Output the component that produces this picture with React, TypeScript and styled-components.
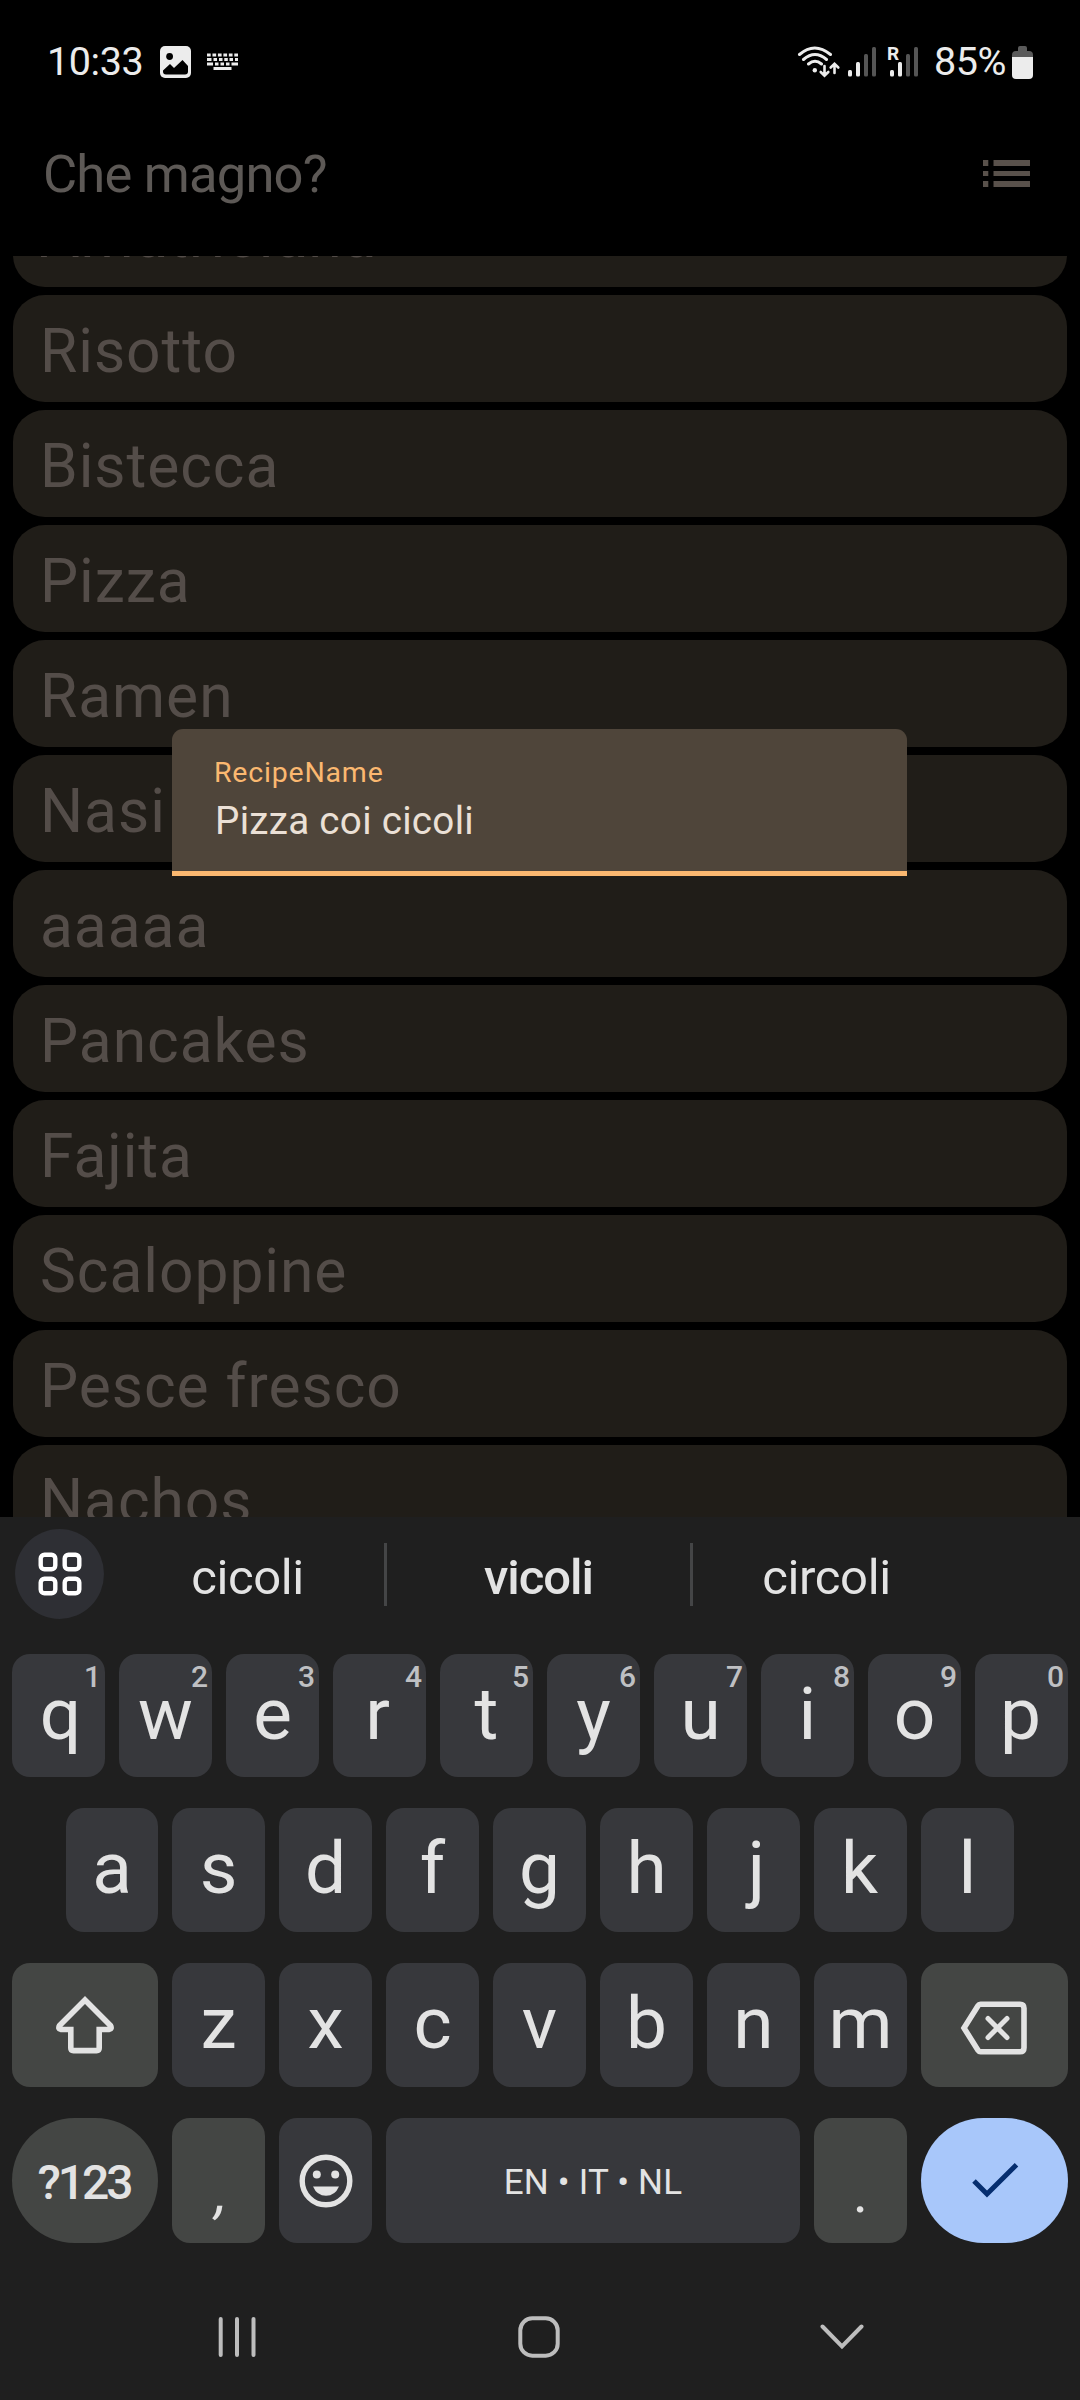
import React from "react";
import styled, { createGlobalStyle } from "styled-components";

const GlobalStyle = createGlobalStyle`
  * { box-sizing: border-box; }
  html, body { margin: 0; padding: 0; background: #000; }
  body { font-family: Roboto, "Noto Sans", sans-serif; overflow: hidden; }
  svg { display: block; flex: none; }
`;

const Screen = styled.div`
  position: relative;
  width: 1080px;
  height: 2400px;
  display: flex;
  flex-direction: column;
  overflow: hidden;
  background: #000;
`;

const StatusBar = styled.div`
  height: 124px;
  flex: none;
  display: flex;
  align-items: center;
  justify-content: space-between;
  padding: 0 47px 0 47px;
  color: #ececec;
`;

const StatusGroup = styled.div<{ $gap?: number }>`
  display: flex;
  align-items: center;
  gap: ${(p) => p.$gap ?? 0}px;
`;

const StatusText = styled.span<{ $width: number }>`
  width: ${(p) => p.$width}px;
  font-size: 39.5px;
  line-height: 48px;
  letter-spacing: -0.4px;
  white-space: nowrap;
`;

const AppBar = styled.header`
  height: 132px;
  flex: none;
  display: flex;
  align-items: center;
  justify-content: space-between;
  padding: 0 50px 33px 43px;
`;

const Title = styled.h1`
  margin: 0;
  font-size: 52.5px;
  font-weight: 400;
  line-height: 64px;
  letter-spacing: -0.8px;
  color: #5d5956;
`;

const Viewport = styled.main`
  height: 1261px;
  flex: none;
  overflow: hidden;
  padding: 0 13px;
`;

const RecipeList = styled.ul`
  list-style: none;
  margin: -76px 0 0;
  padding: 0;
  display: flex;
  flex-direction: column;
  gap: 8px;
`;

const RecipeCard = styled.li`
  height: 107px;
  flex: none;
  display: flex;
  align-items: center;
  padding: 6px 27px 0;
  border-radius: 32px;
  background: #201d18;
  color: #544d49;
  font-size: 60.5px;
  line-height: 72px;
  letter-spacing: 0.95px;
`;

const NameField = styled.label`
  position: absolute;
  left: 172px;
  top: 729px;
  width: 735px;
  height: 147px;
  display: flex;
  flex-direction: column;
  padding: 27px 42px 0;
  border-radius: 11px 11px 0 0;
  border-bottom: 5px solid #fbb870;
  background: #4f453a;
`;

const FieldLabel = styled.span`
  font-size: 28.5px;
  line-height: 34px;
  letter-spacing: 0.8px;
  color: #fbb870;
`;

const FieldValue = styled.span`
  margin: 8px 0 0 1px;
  font-size: 38.6px;
  line-height: 46px;
  letter-spacing: 0.3px;
  color: #ebe0d6;
`;

const Keyboard = styled.section`
  height: 883px;
  flex: none;
  display: flex;
  flex-direction: column;
  background: #1f1f1f;
  color: #e3e3e3;
`;

const SuggestionStrip = styled.div`
  height: 137px;
  flex: none;
  display: flex;
  align-items: flex-start;
  padding: 12px 120px 0 15px;
`;

const ToolsButton = styled.div`
  width: 89px;
  height: 90px;
  flex: none;
  display: flex;
  align-items: center;
  justify-content: center;
  border-radius: 50%;
  background: #2e2f34;
`;

const Suggestion = styled.div<{ $width: number; $strong?: boolean; $shift?: number }>`
  width: ${(p) => p.$width}px;
  height: 90px;
  display: flex;
  align-items: center;
  justify-content: center;
  padding: 6px 0 0 ${(p) => p.$shift ?? 0}px;
  font-size: 49px;
  font-weight: ${(p) => (p.$strong ? 500 : 400)};
  letter-spacing: ${(p) => (p.$strong ? -1 : -0.4)}px;
`;

const Divider = styled.div`
  width: 3px;
  height: 63px;
  margin-top: 14px;
  background: #444546;
`;

const Keys = styled.div`
  display: flex;
  flex-direction: column;
  gap: 31px;
`;

const KeyRow = styled.div<{ $height: number; $inset?: number }>`
  height: ${(p) => p.$height}px;
  display: flex;
  gap: 14px;
  padding: 0 ${(p) => p.$inset ?? 12}px;
`;

type Tone = "plain" | "muted" | "accent";
const tones: Record<Tone, string> = { plain: "#37383c", muted: "#444644", accent: "#a8c7fa" };

const Key = styled.div<{ $tone?: Tone; $width?: number; $pill?: boolean }>`
  position: relative;
  flex: ${(p) => (p.$width ? `0 0 ${p.$width}px` : "1 1 0")};
  display: flex;
  align-items: center;
  justify-content: center;
  border-radius: ${(p) => (p.$pill ? 63 : 18)}px;
  background: ${(p) => tones[p.$tone ?? "plain"]};
`;

const Letter = styled.span<{ $nudge: number }>`
  font-size: 73px;
  line-height: 88px;
  padding-bottom: 4px;
  transform: translateX(${(p) => p.$nudge}px);
`;

const Hint = styled.span`
  position: absolute;
  top: 5px;
  right: 4px;
  font-size: 30px;
  line-height: 36px;
  font-weight: 500;
  color: #bfc0c3;
`;

const SymbolsLabel = styled.span`
  padding: 3px 2px 0 0;
  font-size: 48px;
  font-weight: 500;
  letter-spacing: -3px;
`;

const SpaceLabel = styled.span`
  padding-top: 4px;
  font-size: 35px;
  letter-spacing: 0.2px;
`;

const Punctuation = styled.span<{ $slant?: boolean }>`
  font-size: 58px;
  line-height: 70px;
  padding-top: 22px;
  transform: ${(p) => (p.$slant ? "translateX(5px) skewX(-10deg)" : "none")};
`;

const BackspaceSlot = styled.span`
  padding: 5px 2px 0 0;
`;

const NavBar = styled.nav`
  flex: 1;
  display: flex;
  justify-content: space-between;
  align-items: center;
  padding: 31px 216px 0;
`;

const recipes = [
  "Amatriciana", "Risotto", "Bistecca", "Pizza", "Ramen", "Nasi",
  "aaaaa", "Pancakes", "Fajita", "Scaloppine", "Pesce fresco", "Nachos",
];

/* Optical centring for letters whose side bearings are uneven. */
const nudges: Record<string, number> = { q: 2, r: -2, j: 3, p: -1, k: -1 };

const LetterCap = ({ ch }: { ch: string }) => <Letter $nudge={nudges[ch] ?? 0}>{ch}</Letter>;

const SignalBars = () => (
  <g stroke="none">
    <rect x="0" y="23" width="4" height="6.5" rx="1.5" fill="#ececec" />
    <rect x="8" y="15" width="4" height="14.5" rx="1.5" fill="#ececec" />
    <rect x="16" y="7" width="4" height="22.5" rx="1.5" fill="#555" />
    <rect x="24" y="0" width="4" height="29.5" rx="1.5" fill="#555" />
  </g>
);

const PhotoIcon = () => (
  <svg width="31" height="32" viewBox="0 0 31 32">
    <rect width="31" height="32" rx="5" fill="#ececec" />
    <circle cx="9.6" cy="10.5" r="3.4" fill="#000" />
    <path d="M3 24.5L10 18l4 4 8.5-8 5.5 6v5.500q0 3-3 3H6q-3 0-3-3z" fill="#000" />
  </svg>
);

const KeyboardIcon = () => (
  <svg width="31" height="18" viewBox="0 0 31 18" stroke="#ececec" strokeWidth="3" fill="none">
    <path d="M0 2h31" strokeDasharray="3.700 1.760" />
    <path d="M0 6.500h4.500M6.500 6.500h3.500M12 6.500h3.500M17.300 6.500h3.500M22.500 6.500h3.500M28 6.500h3" />
    <path d="M0 11h6M8 11h3.500M13.500 11h3.500M19 11h3.500M24.500 11h6.500" />
    <path d="M6.500 15.500h18" />
  </svg>
);

const ConnectivityIcons = () => (
  <svg width="124" height="34" viewBox="0 0 124 34" fill="none" stroke="#ececec" strokeWidth="3" strokeLinecap="round">
    <path d="M2.500 9.500q15-13 31 0M6.500 14.500q11.500-10 23 0M11.500 19q6.500-5.500 13 0" />
    <circle cx="17.800" cy="25.200" r="2.200" fill="#ececec" stroke="none" />
    <path d="M27.500 21v9.500M23.700 27l3.800 3.700 3.800-3.700M37.500 28v-9M33.700 22.500l3.800-3.700 3.800 3.700" strokeWidth="2.600" />
    <g transform="translate(51 2)"><SignalBars /></g>
    <g transform="translate(93 2)"><SignalBars /></g>
    <text x="90" y="15" fontFamily="Roboto" fontSize="19" fontWeight="700" fill="#ececec" stroke="none">R</text>
  </svg>
);

const BatteryIcon = () => (
  <svg width="21" height="33" viewBox="0 0 21 33">
    <path d="M6 2q0-2 2-2h5q2 0 2 2v3h2q4 0 4 4v3H0V9q0-4 4-4h2z" fill="#5a5a5a" />
    <path d="M0 11h21v18q0 4-4 4H4q-4 0-4-4z" fill="#ececec" />
  </svg>
);

const ListIcon = () => (
  <svg width="47" height="28" viewBox="0 0 47 28" fill="#59514b">
    <path d="M0 0h5.300v6H0zM10.500 0H47v6H10.500zM0 11h5.300v5H0zM10.500 11H47v5H10.500zM0 21h5.300v6H0zM10.500 21H47v6H10.500z" />
  </svg>
);

const ToolsIcon = () => (
  <svg width="44" height="44" viewBox="0 0 44 44" fill="none" stroke="#fff" strokeWidth="4.400">
    <rect x="2.700" y="2.700" width="14.600" height="14.600" rx="3.800" />
    <rect x="26.700" y="2.700" width="14.600" height="14.600" rx="3.800" />
    <rect x="2.700" y="26.700" width="14.600" height="14.600" rx="3.800" />
    <rect x="26.700" y="26.700" width="14.600" height="14.600" rx="3.800" />
  </svg>
);

const ShiftIcon = () => (
  <svg width="60" height="58" viewBox="0 0 60 58" fill="none" stroke="#e3e3e3" strokeWidth="5.600">
    <path d="M30 4L4.600 29.500q-2 3.500 1.400 4H15.800V52q0 2.600 2.600 2.600h23.200q2.600 0 2.600-2.600V33.500H54q3.400-.5 1.400-4z" />
  </svg>
);

const BackspaceIcon = () => (
  <svg width="68" height="54" viewBox="0 0 68 54" fill="none" stroke="#e3e3e3" strokeWidth="5.600">
    <path d="M20.500 3.300H60q4 0 4 4v39.400q0 4-4 4H20.500q-1.600 0-2.500-1.400L4 27 18 4.700q.9-1.400 2.500-1.400z" />
    <path d="M28 17.500l19 19M47 17.500l-19 19" strokeLinecap="round" strokeWidth="5" />
  </svg>
);

const EmojiIcon = () => (
  <svg width="54" height="54" viewBox="0 0 54 54">
    <circle cx="27" cy="27" r="23.800" fill="none" stroke="#e3e3e3" strokeWidth="5.400" />
    <circle cx="17.800" cy="20.500" r="4" fill="#e3e3e3" />
    <circle cx="36.200" cy="20.500" r="4" fill="#e3e3e3" />
    <path d="M14 32.500h26q-4 9.300-13 9.300t-13-9.300z" fill="#e3e3e3" />
  </svg>
);

const CheckIcon = () => (
  <svg width="48" height="36" viewBox="0 0 48 36" fill="none" stroke="#062e6f" strokeWidth="5">
    <path d="M3 18L16 31 45.500 1.800" />
  </svg>
);

const RecentsIcon = () => (
  <svg width="42" height="42" viewBox="0 0 42 42" stroke="#bdbdbd" strokeWidth="4" strokeLinecap="round">
    <path d="M4.700 3v36M21 3v36M37.500 3v36" />
  </svg>
);

const HomeIcon = () => (
  <svg width="42" height="42" viewBox="0 0 42 42" fill="none" stroke="#bdbdbd" strokeWidth="4">
    <rect x="2.300" y="2.300" width="37.400" height="37.400" rx="12" />
  </svg>
);

const HideIcon = () => (
  <svg width="44" height="42" viewBox="0 0 44 42" fill="none" stroke="#bdbdbd" strokeWidth="4" strokeLinecap="round">
    <path d="M2.500 10.500L22 30.500 41.500 10.500" />
  </svg>
);

export default function App() {
  return (
    <Screen>
      <GlobalStyle />
      <StatusBar>
        <StatusGroup $gap={16}>
          <StatusText $width={97}>10:33</StatusText>
          <PhotoIcon />
          <KeyboardIcon />
        </StatusGroup>
        <StatusGroup>
          <StatusGroup $gap={13}>
            <ConnectivityIcons />
            <StatusText $width={78}>85%</StatusText>
          </StatusGroup>
          <BatteryIcon />
        </StatusGroup>
      </StatusBar>
      <AppBar>
        <Title>Che magno?</Title>
        <ListIcon />
      </AppBar>
      <Viewport>
        <RecipeList>
          {recipes.map((name) => (
            <RecipeCard key={name}>{name}</RecipeCard>
          ))}
        </RecipeList>
      </Viewport>
      <Keyboard>
        <SuggestionStrip>
          <ToolsButton><ToolsIcon /></ToolsButton>
          <Suggestion $width={280} $shift={7}>cicoli</Suggestion>
          <Divider />
          <Suggestion $width={303} $strong>vicoli</Suggestion>
          <Divider />
          <Suggestion $width={267}>circoli</Suggestion>
        </SuggestionStrip>
        <Keys>
          <KeyRow $height={123}>
            {"qwertyuiop".split("").map((ch, i) => (
              <Key key={ch}>
                <LetterCap ch={ch} />
                <Hint>{(i + 1) % 10}</Hint>
              </Key>
            ))}
          </KeyRow>
          <KeyRow $height={124} $inset={66}>
            {"asdfghjkl".split("").map((ch, i) => (
              <Key key={ch} $width={i === 0 ? 92 : 93}><LetterCap ch={ch} /></Key>
            ))}
          </KeyRow>
          <KeyRow $height={124}>
            <Key $tone="muted" $width={146}><ShiftIcon /></Key>
            {"zxcvbnm".split("").map((ch) => (
              <Key key={ch}><LetterCap ch={ch} /></Key>
            ))}
            <Key $tone="muted" $width={147}><BackspaceSlot><BackspaceIcon /></BackspaceSlot></Key>
          </KeyRow>
          <KeyRow $height={125}>
            <Key $tone="muted" $width={146} $pill><SymbolsLabel>?123</SymbolsLabel></Key>
            <Key $tone="muted" $width={93}><Punctuation $slant>,</Punctuation></Key>
            <Key $width={93}><EmojiIcon /></Key>
            <Key><SpaceLabel>EN • IT • NL</SpaceLabel></Key>
            <Key $tone="muted" $width={93}><Punctuation>.</Punctuation></Key>
            <Key $tone="accent" $width={147} $pill><CheckIcon /></Key>
          </KeyRow>
        </Keys>
        <NavBar>
          <RecentsIcon />
          <HomeIcon />
          <HideIcon />
        </NavBar>
      </Keyboard>
      <NameField>
        <FieldLabel>RecipeName</FieldLabel>
        <FieldValue>Pizza coi cicoli</FieldValue>
      </NameField>
    </Screen>
  );
}
